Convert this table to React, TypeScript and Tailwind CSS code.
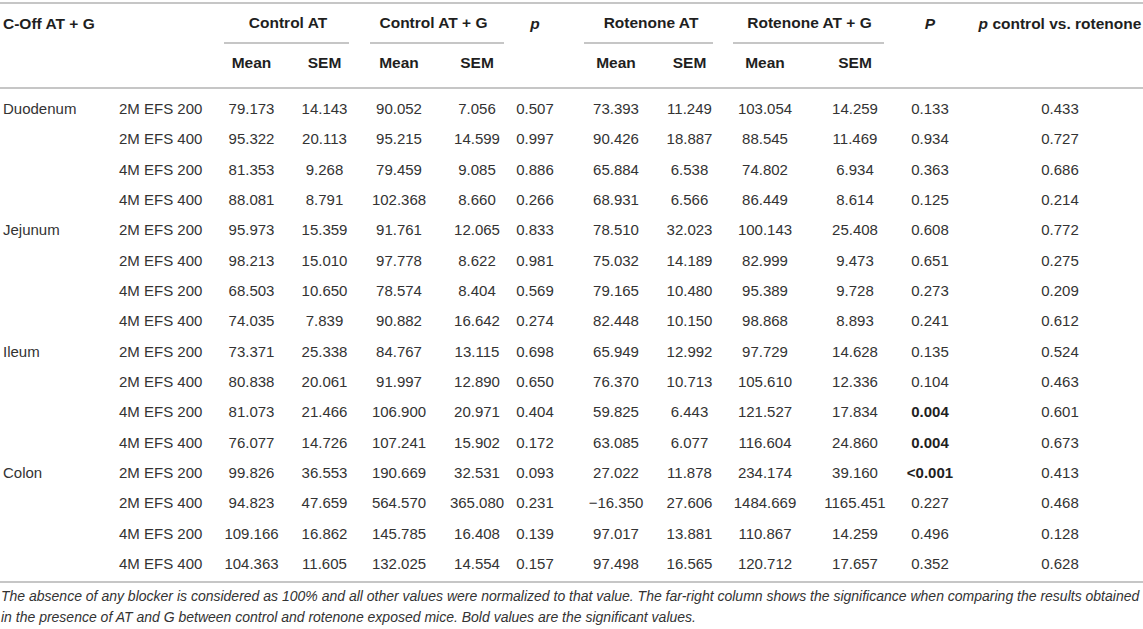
import React from "react";

type Row = { tissue?: string; efs: string; v: string[]; bold?: boolean };

const rows: Row[] = [
  { tissue: "Duodenum", efs: "2M EFS 200", v: ["79.173", "14.143", "90.052", "7.056", "0.507", "73.393", "11.249", "103.054", "14.259", "0.133", "0.433"] },
  { efs: "2M EFS 400", v: ["95.322", "20.113", "95.215", "14.599", "0.997", "90.426", "18.887", "88.545", "11.469", "0.934", "0.727"] },
  { efs: "4M EFS 200", v: ["81.353", "9.268", "79.459", "9.085", "0.886", "65.884", "6.538", "74.802", "6.934", "0.363", "0.686"] },
  { efs: "4M EFS 400", v: ["88.081", "8.791", "102.368", "8.660", "0.266", "68.931", "6.566", "86.449", "8.614", "0.125", "0.214"] },
  { tissue: "Jejunum", efs: "2M EFS 200", v: ["95.973", "15.359", "91.761", "12.065", "0.833", "78.510", "32.023", "100.143", "25.408", "0.608", "0.772"] },
  { efs: "2M EFS 400", v: ["98.213", "15.010", "97.778", "8.622", "0.981", "75.032", "14.189", "82.999", "9.473", "0.651", "0.275"] },
  { efs: "4M EFS 200", v: ["68.503", "10.650", "78.574", "8.404", "0.569", "79.165", "10.480", "95.389", "9.728", "0.273", "0.209"] },
  { efs: "4M EFS 400", v: ["74.035", "7.839", "90.882", "16.642", "0.274", "82.448", "10.150", "98.868", "8.893", "0.241", "0.612"] },
  { tissue: "Ileum", efs: "2M EFS 200", v: ["73.371", "25.338", "84.767", "13.115", "0.698", "65.949", "12.992", "97.729", "14.628", "0.135", "0.524"] },
  { efs: "2M EFS 400", v: ["80.838", "20.061", "91.997", "12.890", "0.650", "76.370", "10.713", "105.610", "12.336", "0.104", "0.463"] },
  { efs: "4M EFS 200", v: ["81.073", "21.466", "106.900", "20.971", "0.404", "59.825", "6.443", "121.527", "17.834", "0.004", "0.601"], bold: true },
  { efs: "4M EFS 400", v: ["76.077", "14.726", "107.241", "15.902", "0.172", "63.085", "6.077", "116.604", "24.860", "0.004", "0.673"], bold: true },
  { tissue: "Colon", efs: "2M EFS 200", v: ["99.826", "36.553", "190.669", "32.531", "0.093", "27.022", "11.878", "234.174", "39.160", "<0.001", "0.413"], bold: true },
  { efs: "2M EFS 400", v: ["94.823", "47.659", "564.570", "365.080", "0.231", "\u221216.350", "27.606", "1484.669", "1165.451", "0.227", "0.468"] },
  { efs: "4M EFS 200", v: ["109.166", "16.862", "145.785", "16.408", "0.139", "97.017", "13.881", "110.867", "14.259", "0.496", "0.128"] },
  { efs: "4M EFS 400", v: ["104.363", "11.605", "132.025", "14.554", "0.157", "97.498", "16.565", "120.712", "17.657", "0.352", "0.628"] },
];

// per value-column alignment padding (shifts the centred text)
const valPad = [
  "",
  "",
  "",
  "pl-[11px]",
  "pr-[11px]",
  "pl-[5px]",
  "",
  "pr-[7px]",
  "pl-[8px]",
  "pr-[27px]",
  "pr-[18px]",
];

const grid =
  "grid grid-cols-[115px_100px_73px_73px_76px_69px_69px_77px_75px_83px_82px_103px_148px]";

function GroupHead({ label, rule }: { label: string; rule: string }) {
  return (
    <div className="col-span-2 flex flex-col">
      <div className="h-[38px] flex items-center justify-center">{label}</div>
      <div className={`h-[2px] bg-[#c6c6c6] ${rule}`} />
    </div>
  );
}

export default function App() {
  return (
    <div
      className="w-[1143px] h-[629px] bg-white text-[#333] overflow-hidden"
      style={{ fontFamily: '"Liberation Sans", Arial, Helvetica, sans-serif' }}
    >
      <div className="h-[2px]" />
      <div className="h-[2px] bg-[#c6c6c6]" />
      {/* header */}
      <div className={`${grid} font-bold text-[15.5px] text-[#1f1f1f] leading-[18px]`}>
        <div className="col-span-2 h-[40px] flex items-center pl-[3px]">C-Off AT + G</div>
        <GroupHead label="Control AT" rule="ml-[9px] mr-[12px]" />
        <GroupHead label="Control AT + G" rule="ml-[9px] mr-[2px]" />
        <div className="h-[40px] flex items-center justify-center pr-[11px]">
          <i>p</i>
        </div>
        <GroupHead label="Rotenone AT" rule="ml-[9px] mr-[14px]" />
        <GroupHead label="Rotenone AT + G" rule="ml-[6px] mr-[8px]" />
        <div className="h-[40px] flex items-center justify-center pr-[27px]">
          <i>P</i>
        </div>
        <div className="h-[40px] flex items-center justify-center pr-[18px] whitespace-nowrap">
          <span>
            <i>p</i> control vs. rotenone
          </span>
        </div>

        <div className="col-span-2 h-[43px]" />
        <div className="h-[43px] pt-[10px] text-center">Mean</div>
        <div className="h-[43px] pt-[10px] text-center">SEM</div>
        <div className="h-[43px] pt-[10px] text-center">Mean</div>
        <div className="h-[43px] pt-[10px] text-center pl-[11px]">SEM</div>
        <div className="h-[43px]" />
        <div className="h-[43px] pt-[10px] text-center pl-[5px]">Mean</div>
        <div className="h-[43px] pt-[10px] text-center">SEM</div>
        <div className="h-[43px] pt-[10px] text-center pr-[7px]">Mean</div>
        <div className="h-[43px] pt-[10px] text-center pl-[8px]">SEM</div>
        <div className="h-[43px]" />
        <div className="h-[43px]" />
      </div>
      <div className="h-[2px] bg-[#c6c6c6]" />
      {/* body */}
      <div className={`${grid} pt-[5px] pb-[2px] text-[15px] leading-[18px]`}>
        {rows.map((r, i) => (
          <React.Fragment key={i}>
            <div className="h-[30.33px] flex items-center pl-[3px]">{r.tissue ?? ""}</div>
            <div className="h-[30.33px] flex items-center pl-[4px] whitespace-nowrap">{r.efs}</div>
            {r.v.map((val, j) => (
              <div
                key={j}
                className={`h-[30.33px] flex items-center justify-center whitespace-nowrap ${valPad[j]} ${
                  r.bold && j === 9 ? "font-bold text-[#1f1f1f]" : ""
                }`}
              >
                {val}
              </div>
            ))}
          </React.Fragment>
        ))}
      </div>
      <div className="h-[2px] bg-[#c6c6c6]" />
      <p className="pt-[3px] pl-[1px] italic text-[14px] leading-[21px] text-[#333]">
        The absence of any blocker is considered as 100% and all other values were normalized to that value. The
        far-right column shows the significance when comparing the results obtained in the presence of AT and G
        between control and rotenone exposed mice. Bold values are the significant values.
      </p>
    </div>
  );
}
